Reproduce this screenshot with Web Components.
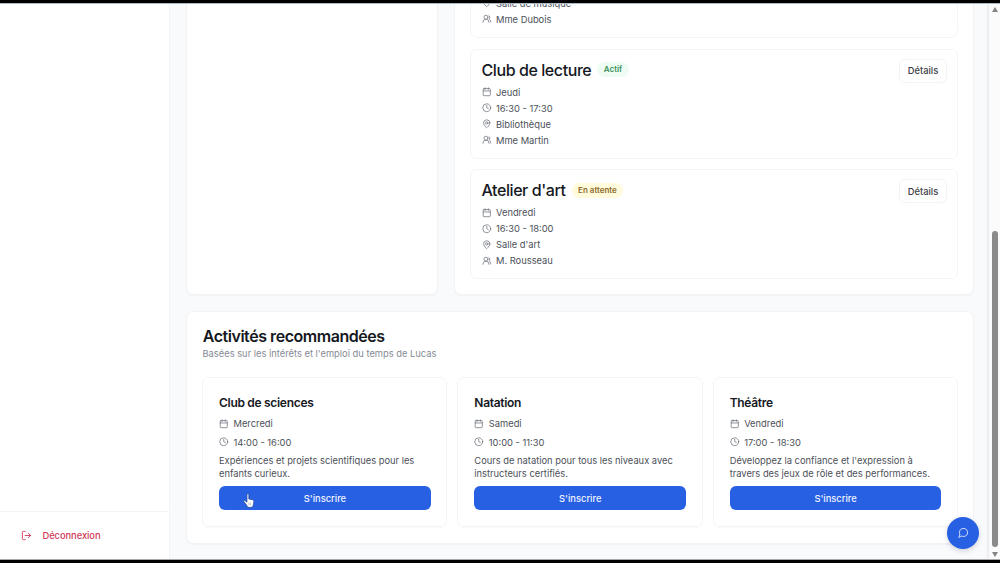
<!DOCTYPE html>
<html lang="fr">
<head>
<meta charset="utf-8">
<title>Activités</title>
<style>
    body {
        margin: 0;
        width: 1000px;
        height: 563px;
        overflow: hidden;
        background: #000;
        font-family: Inter, 'Liberation Sans', sans-serif;
        color: #4b5058;
    }
</style>
</head>
<body>
<activities-page></activities-page>

<script>
/*
 * ICONS, 24px grid
 */
const ICONS = {
    calendar: '<path d="M8 2v4M16 2v4M3 10h18"/><rect x="3" y="4" width="18" height="18" rx="2"/>',
    clock: '<circle cx="12" cy="12" r="10"/><path d="M12 6v6l4 2"/>',
    pin: '<path d="M20 10c0 6-8 12-8 12s-8-6-8-12a8 8 0 0 1 16 0Z"/><circle cx="12" cy="10" r="3"/>',
    users: '<path d="M18 21a8 8 0 0 0-16 0"/><circle cx="10" cy="8" r="5"/><path d="M22 20c0-3.37-2-6.5-4-8a5 5 0 0 0-.45-8.3"/>',
    logout: '<path d="M9 21H5a2 2 0 0 1-2-2V5a2 2 0 0 1 2-2h4M16 17l5-5-5-5M21 12H9"/>',
    message: '<path d="M7.9 20A9 9 0 1 0 4 16.1L2 22Z"/>',
}

class BaseElement extends HTMLElement {
    constructor() {
        super()
        const template = document.createElement('template')
        template.innerHTML = this.render()
        this.attachShadow({ mode: 'open' })
        this.shadowRoot.appendChild(template.content.cloneNode(true))
    }
}

customElements.define('ui-icon', class extends HTMLElement {
    connectedCallback() {
        if (this.shadowRoot) return
        this.attachShadow({ mode: 'open' }).innerHTML = `
<style>
    :host { display: block; width: 9.5px; height: 9.5px; flex: none; }
    svg { display: block; width: 100%; height: 100%; overflow: visible; }
</style>
<svg viewBox="0 0 24 24" fill="none" stroke="currentColor" stroke-width="2"
    stroke-linecap="round" stroke-linejoin="round">${ICONS[this.getAttribute('name')]}</svg>`
    }
})

/*
 * ICON + LABEL
 */
customElements.define('info-row', class extends HTMLElement {
    connectedCallback() {
        if (this.shadowRoot) return
        this.attachShadow({ mode: 'open' }).innerHTML = `
<style>
    :host {
        display: flex;
        align-items: center;
        gap: 5px;
        height: 16px;
        font-size: 9.33px;
        white-space: nowrap;
    }
    ui-icon { color: #747982; }
</style>
<ui-icon name="${this.getAttribute('icon')}"></ui-icon><span><slot></slot></span>`
    }
})

class StatusBadge extends BaseElement {
    render() {
        return `
<style>
    :host {
        display: block;
        padding: 0 6.5px;
        border-radius: 8px;
        font-size: 8px;
        line-height: 15px;
        font-weight: 600;
        color: #39915a;
        background: #effcf3;
    }
    :host([kind='pending']) {
        color: #8d6b2b;
        background: #fffbdc;
    }
</style>
<slot></slot>`
    }
}
customElements.define('status-badge', StatusBadge)

class UiButton extends BaseElement {
    render() {
        return `
<style>
    :host {
        display: flex;
        align-items: center;
        justify-content: center;
        box-sizing: border-box;
        height: 24px;
        border-radius: 6px;
        font-size: 9.33px;
        font-weight: 500;
        color: #f0f4ff;
        background: #2860e4;
    }
    :host([outline]) {
        width: 48px;
        border: 1px solid #f2f3f4;
        color: #3c4046;
        background: #fff;
    }
</style>
<slot></slot>`
    }
}
customElements.define('ui-button', UiButton)

class ActivityCard extends BaseElement {
    render() {
        return `
<style>
    :host {
        display: flex;
        justify-content: space-between;
        align-items: flex-start;
        box-sizing: border-box;
        height: 110px;
        padding: 9px 10px 10px 10.5px;
        border: 1px solid #f5f5f6;
        border-radius: 7px;
    }
    :host([compact]) {
        align-items: flex-end;
    }
    :host([compact]) .head,
    :host([compact]) ui-button {
        display: none;
    }
    .head {
        display: flex;
        align-items: center;
        gap: 6px;
        height: 22px;
        margin-bottom: 3.5px;
    }
    h3 {
        margin: 0;
        font-size: 16px;
        line-height: 22px;
        font-weight: 500;
        letter-spacing: -0.42px;
        color: #15181e;
    }
</style>
<div>
    <div class="head"><h3><slot name="title"></slot></h3><slot name="badge"></slot></div>
    <slot></slot>
</div>
<ui-button outline>Détails</ui-button>`
    }
}
customElements.define('activity-card', ActivityCard)

class SuggestionCard extends BaseElement {
    render() {
        return `
<style>
    :host {
        display: block;
        box-sizing: border-box;
        height: 150px;
        padding: 16px 15.5px 0 16px;
        border: 1px solid #f4f5f6;
        border-radius: 7px;
        box-shadow: 0 1px 1px rgba(20, 30, 50, 0.02);
    }
    h4 {
        margin: 0 0 4.5px;
        font-size: 12px;
        line-height: 17px;
        font-weight: 600;
        letter-spacing: -0.3px;
        color: #15181e;
    }
    .infos {
        display: grid;
        gap: 2.5px;
        margin-bottom: 4px;
    }
    p {
        margin: 0 0 5.5px;
        font-size: 9.33px;
        line-height: 13.33px;
    }
</style>
<h4><slot name="title"></slot></h4>
<div class="infos"><slot></slot></div>
<p><slot name="text"></slot></p>
<ui-button>S'inscrire</ui-button>`
    }
}
customElements.define('suggestion-card', SuggestionCard)

class UiPanel extends BaseElement {
    render() {
        return `
<style>
    :host {
        display: block;
        box-sizing: border-box;
        padding: 15px;
        background: #fff;
        border: 1px solid #f2f3f5;
        border-radius: 7px;
        box-shadow: 0 1px 1px rgba(20, 30, 50, 0.03);
    }
</style>
<slot></slot>`
    }
}
customElements.define('ui-panel', UiPanel)

class SideBar extends BaseElement {
    render() {
        return `
<style>
    :host {
        display: flex;
        flex-direction: column;
        justify-content: flex-end;
        box-sizing: border-box;
        width: 170px;
        background: #fff;
        border-right: 1px solid #f3f4f6;
    }
    .logout {
        display: flex;
        align-items: center;
        gap: 10.5px;
        box-sizing: border-box;
        height: 48px;
        padding: 0 0 1px 21px;
        border-top: 1px solid #f3f4f6;
        font-size: 9.33px;
        font-weight: 500;
        letter-spacing: -0.05px;
        color: #d03a58;
    }
    ui-icon { width: 11px; height: 11px; }
</style>
<div class="logout"><ui-icon name="logout"></ui-icon>Déconnexion</div>`
    }
}
customElements.define('side-bar', SideBar)

class ScrollBar extends BaseElement {
    render() {
        return `
<style>
    :host {
        display: flex;
        flex-direction: column;
        align-items: center;
        justify-content: space-between;
        box-sizing: border-box;
        width: 11px;
        padding: 3px 0 2px 1px;
        background: #fbfbfb;
        box-shadow: -1px 0 3px rgba(30, 30, 45, 0.1);
    }
    svg { display: block; width: 6px; height: 5px; fill: #858585; }
    .thumb {
        width: 6px;
        height: 316px;
        margin: auto 0 5px;
        border-radius: 3px;
        background: #8b8b8b;
    }
</style>
<svg viewBox="0 0 6 5"><path d="M3 0 6 5H0Z"/></svg>
<div class="thumb"></div>
<svg viewBox="0 0 6 5"><path d="M0 0h6L3 5Z"/></svg>`
    }
}
customElements.define('scroll-bar', ScrollBar)

/*
 * PAGE
 */
class ActivitiesPage extends BaseElement {
    render() {
        return `
<style>
    :host {
        display: flex;
        position: relative;
        box-sizing: border-box;
        width: 1000px;
        height: 563px;
        padding: 3px 0;
        background: #000;
    }
    .frame {
        display: flex;
        box-sizing: border-box;
        width: 100%;
        overflow: hidden;
        border-top: 1px solid #a9bdc9;
        border-bottom: 1px solid #a9a9aa;
    }
    main {
        flex: 1;
        display: flex;
        flex-direction: column;
        justify-content: flex-end;
        gap: 16px;
        min-width: 0;
        padding: 0 15px 15px 16px;
        background: #f9fafc;
    }
    .top {
        display: grid;
        grid-template-columns: 252px 520px;
        gap: 16px;
        flex: none;
    }
    .list { display: grid; gap: 10.5px; }
    .suggestions { flex: none; height: 233px; }
    h2 {
        margin: 0 0 0 0.7px;
        font-size: 16px;
        line-height: 18px;
        font-weight: 600;
        letter-spacing: -0.45px;
        color: #15181e;
    }
    .sub {
        margin: 2px 0 16px 0.5px;
        font-size: 9.33px;
        line-height: 14px;
        color: #858a93;
    }
    .cards {
        display: grid;
        grid-template-columns: repeat(3, 1fr);
        gap: 10px;
    }
    .chat {
        position: absolute;
        left: 947px;
        top: 516.5px;
        display: grid;
        place-items: center;
        width: 32px;
        height: 32px;
        border-radius: 50%;
        color: #dde7ff;
        background: #2860e4;
        box-shadow: 0 2px 5px rgba(20, 30, 60, 0.18);
    }
    .chat ui-icon { width: 11px; height: 11px; }
    .pointer {
        position: absolute;
        left: 243px;
        top: 493px;
        width: 12px;
        height: 15px;
    }
</style>
<div class="frame">
    <side-bar></side-bar>
    <main>
        <div class="top">
            <ui-panel></ui-panel>
            <ui-panel>
                <div class="list">
                    <activity-card compact>
                        <info-row icon="pin">Salle de musique</info-row>
                        <info-row icon="users">Mme Dubois</info-row>
                    </activity-card>
                    <activity-card>
                        <span slot="title">Club de lecture</span>
                        <status-badge slot="badge">Actif</status-badge>
                        <info-row icon="calendar">Jeudi</info-row>
                        <info-row icon="clock">16:30 - 17:30</info-row>
                        <info-row icon="pin">Bibliothèque</info-row>
                        <info-row icon="users">Mme Martin</info-row>
                    </activity-card>
                    <activity-card>
                        <span slot="title">Atelier d'art</span>
                        <status-badge slot="badge" kind="pending">En attente</status-badge>
                        <info-row icon="calendar">Vendredi</info-row>
                        <info-row icon="clock">16:30 - 18:00</info-row>
                        <info-row icon="pin">Salle d'art</info-row>
                        <info-row icon="users">M. Rousseau</info-row>
                    </activity-card>
                </div>
            </ui-panel>
        </div>
        <ui-panel class="suggestions">
            <h2>Activités recommandées</h2>
            <div class="sub">Basées sur les intérêts et l'emploi du temps de Lucas</div>
            <div class="cards">
                <suggestion-card>
                    <span slot="title">Club de sciences</span>
                    <info-row icon="calendar">Mercredi</info-row>
                    <info-row icon="clock">14:00 - 16:00</info-row>
                    <span slot="text">Expériences et projets scientifiques pour les enfants curieux.</span>
                </suggestion-card>
                <suggestion-card>
                    <span slot="title">Natation</span>
                    <info-row icon="calendar">Samedi</info-row>
                    <info-row icon="clock">10:00 - 11:30</info-row>
                    <span slot="text">Cours de natation pour tous les niveaux avec instructeurs certifiés.</span>
                </suggestion-card>
                <suggestion-card>
                    <span slot="title">Théâtre</span>
                    <info-row icon="calendar">Vendredi</info-row>
                    <info-row icon="clock">17:00 - 18:30</info-row>
                    <span slot="text">Développez la confiance et l'expression à travers des jeux de rôle et des performances.</span>
                </suggestion-card>
            </div>
        </ui-panel>
    </main>
    <scroll-bar></scroll-bar>
</div>
<div class="chat"><ui-icon name="message"></ui-icon></div>
<svg class="pointer" viewBox="0 0 12 15">
    <path d="M4 1.6c0-1.2 1.8-1.2 1.8 0V6l3.6.7c1 .2 1.5.8 1.4 1.8l-.4 3-1 2.8H4.7L3.6 12 1 8.9c-.6-1 .6-1.7 1.4-1L4 9.2Z"
        fill="#fff" stroke="#234a9c" stroke-width=".7" stroke-linejoin="round"/>
    <path d="M6 9.6v2.6M7.6 9.6v2.6" stroke="#7c8498" stroke-width=".5"/>
</svg>`
    }
}
customElements.define('activities-page', ActivitiesPage)
</script>
</body>
</html>
